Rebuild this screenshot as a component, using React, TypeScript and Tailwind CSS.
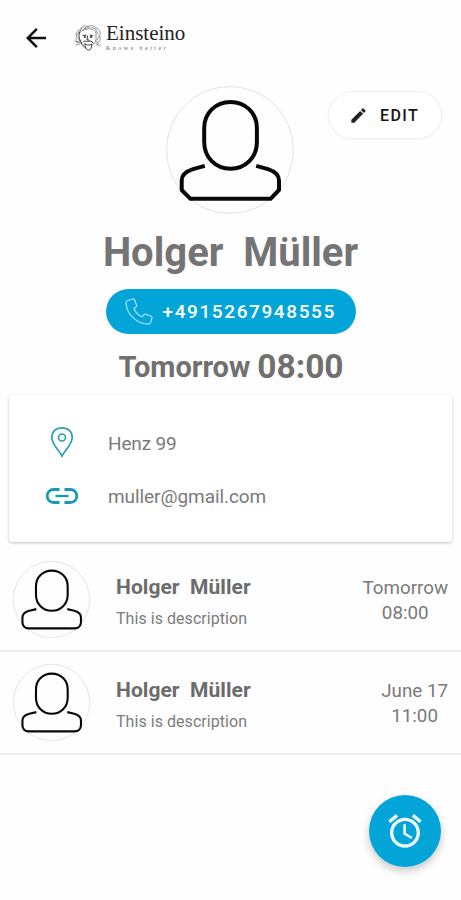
import clsx from 'clsx';

type Appointment = {
  id: number;
  name: string;
  description: string;
  day: string;
  time: string;
};

const APPOINTMENTS: Appointment[] = [
  { id: 1, name: 'Holger  Müller', description: 'This is description', day: 'Tomorrow', time: '08:00' },
  { id: 2, name: 'Holger  Müller', description: 'This is description', day: 'June 17', time: '11:00' },
];

function Avatar({ large = false }: { large?: boolean }) {
  return (
    <svg
      viewBox="0 0 128 128"
      fill="none"
      className={clsx('shrink-0', large ? 'size-[128px]' : 'size-[77px]')}
    >
      <circle cx="64" cy="64" r="63.4" stroke="#e2e2e2" strokeWidth={large ? 1 : 1.5} />
      <g stroke="#080808" strokeWidth={large ? 4 : 3.5} strokeLinejoin="round">
        <path d="M38.2 42C38.2 27 49.5 16 64.5 16S90.9 27 90.9 42V56C90.9 71.5 79.5 82.8 64.5 82.8S38.2 71.5 38.2 56Z" />
        {large ? (
          <path d="M38.8 79.8L27 83.2C20 85.5 15.7 88.500 15.7 94.5V104L24.5 112.8H104.5L113 104V94.5C113 88.5 108.7 85.5 102 83.2L90.2 79.8" />
        ) : (
          <path d="M38.8 80L27 82.7C20 84.5 15.7 88 15.7 94V102C15.7 108 20 112 26 112H102.5C108.5 112 113 108 113 102V94C113 88 108.7 84.5 102 82.7L90.2 80" />
        )}
      </g>
    </svg>
  );
}

function LogoMark() {
  return (
    <svg viewBox="0 0 28 28" fill="none" strokeLinecap="round" className="size-[28px] shrink-0">
      <g stroke="#777" strokeWidth="0.8">
        <path d="M7 19C2 18 1 15 3 13C1 10 3 6 6 6C7 3 11 1 14 2.5C17 0.5 21 2 22 4C26 5 27 9 25.5 12C27 15 26 18 23 19" />
        <path d="M5 8L3 11M4 14L6 17M8 4L5 9M12 3L8 7M22 6L24 10M25 12L23 16M3 19L7 16M25 20L22 17M1 17L4 18M2 21L6 20M26 22L22 20" />
        <path d="M8 7C11 5 13 6 15 4C18 6 20 5 22 9V16C21 19 19 21 17 22" />
        <path d="M17 4C19 3 21 4 22 6M10 5C12 4 13 4 15 3" />
      </g>
      <g stroke="#333" strokeWidth="1">
        <path d="M6 8C4 11 5 15 7 18C8 21 10 23 12 24" />
        <path d="M9 11.5L12 11M16 11L19 12M13.5 12L13 16H15" />
        <path d="M9 18C11 16 13 18 14 17.5C16 16.5 18 17 19 19" />
        <path d="M11 20C11 25 13 26 15 26S18 23 17.5 20C15 21.5 13 21.5 11 20Z" strokeWidth="0.9" />
      </g>
      <circle cx="10.8" cy="13" r="1" fill="#222" />
      <circle cx="17" cy="13" r="1" fill="#222" />
    </svg>
  );
}

function Header() {
  return (
    <header className="flex h-[76px] items-center pl-[21px]">
      <svg viewBox="0 0 24 24" fill="#111" className="size-[30px]">
        <path d="M20 11H7.83l5.59-5.59L12 4l-8 8 8 8 1.41-1.41L7.83 13H20v-2z" />
      </svg>
      <div className="ml-[23px] flex items-center gap-[4px]">
        <LogoMark />
        <div className="pb-[4px] font-['Liberation_Serif',serif] text-[#222]">
          <p className="text-[21px] leading-[24px]">Einsteino</p>
          <p className="text-[6px] leading-[7px] tracking-[2.5px] text-[#666]">Knows better</p>
        </div>
      </div>
    </header>
  );
}

function Profile() {
  return (
    <section className="flex flex-col items-center">
      <div className="mt-[10px] flex w-full pr-[1px]">
        <div className="flex-1" />
        <Avatar large />
        <div className="flex flex-1 justify-end">
          <button className="mt-[5px] mr-[18px] flex h-[48px] w-[114px] items-center rounded-full border border-[#f0f0f0] bg-white pl-[20px] text-[16px] font-medium tracking-[1.4px] text-[#161616] shadow-[0_1px_2px_rgba(0,0,0,0.04)]">
            <svg viewBox="0 0 24 24" fill="#222" className="mr-[12px] size-[19px]">
              <path d="M3 17.25V21h3.75L17.81 9.94l-3.75-3.75L3 17.25zM20.71 7.04c.39-.39.39-1.02 0-1.41l-2.34-2.34c-.39-.39-1.02-.39-1.41 0l-1.83 1.83 3.75 3.75 1.83-1.83z" />
            </svg>
            <span className="pt-[1px]">EDIT</span>
          </button>
        </div>
      </div>

      <h1 className="mt-[16px] text-[40px] leading-[46px] font-bold whitespace-pre text-[#747474]">
        {'Holger  Müller'}
      </h1>

      <button className="mt-[13px] flex h-[45px] w-[250px] items-center rounded-full bg-[#03a4d8] pl-[19px] text-[19px] font-medium tracking-[1.6px] text-white">
        <svg viewBox="0 0 28 28" fill="none" stroke="#a9e2f3" strokeWidth="1.2" strokeLinejoin="round" className="mr-[10px] size-[28px]">
          <path d="M2.5 2.8L7.5 1C8.5 .7 9.2 1 9.6 2L11.5 7C11.8 8 11.5 8.7 10.7 9.2L9 10.5C10.5 14.5 13.5 17.5 17.3 18.8L18.7 17C19.3 16.2 20 16 21 16.4L26 18.3C27 18.7 27.2 19.4 26.9 20.3L25.5 24.5C25.1 25.7 24.2 26.3 23 26.2C11 25.3 1.7 16 1 5C.9 4 1.5 3.2 2.5 2.8Z" />
        </svg>
        <span className="pt-[2px]">+4915267948555</span>
      </button>

      <p className="mt-[13px] flex items-center gap-[7px] pl-[1px] leading-[40px] font-bold text-[#707070]">
        <span className="text-[29px]">Tomorrow</span>
        <span className="text-[33.5px]">08:00</span>
      </p>
    </section>
  );
}

function ContactCard() {
  return (
    <section className="mx-[9px] mt-[8px] h-[147px] rounded-[3px] bg-white pt-[20px] pl-[26px] text-[19px] text-[#7a7a7a] shadow-[0_1px_3px_rgba(0,0,0,0.24)]">
      <div className="flex h-[54px] items-center">
        <div className="mr-[19px] flex w-[54px] justify-center">
          <svg viewBox="0 0 24 32" fill="none" stroke="#2a9fb9" strokeWidth="1.7" className="h-[32px] w-[24px]">
            <path d="M12 30C9 24 1.8 18.5 1.8 11.5C1.8 5.5 6 1.8 12 1.8S22.2 5.5 22.2 11.5C22.2 18.5 15 24 12 30Z" />
            <circle cx="12" cy="11.5" r="3.5" />
          </svg>
        </div>
        <p className="pt-[4px] tracking-[-0.15px]">Henz 99</p>
      </div>
      <div className="flex h-[54px] items-center">
        <div className="mr-[18px] flex w-[54px] justify-center pr-[1px]">
          <svg viewBox="0 0 34 18" fill="none" stroke="#1599b7" strokeWidth="2.8" className="h-[18px] w-[34px]">
            <path d="M14.5 2.5H9C4.5 2.5 2.2 5.5 2.2 9S4.5 15.5 9 15.5H14.5M19.5 2.5H25C29.5 2.5 31.8 5.5 31.8 9S29.5 15.5 25 15.5H19.5" />
            <path d="M10.5 9H23.5" strokeWidth="2.3" />
          </svg>
        </div>
        <p className="pt-[2px] pl-[1px] tracking-[-0.07px]">muller@gmail.com</p>
      </div>
    </section>
  );
}

function AppointmentRow({ appointment }: { appointment: Appointment }) {
  return (
    <li className="flex h-[103px] items-center border-b-2 border-[#eeeeee] pr-[13px] pl-[13px]">
      <Avatar />
      <div className="ml-[26px] flex-1 pt-[4px]">
        <p className="text-[21px] leading-[34px] font-bold tracking-[0.05px] whitespace-pre text-[#6c6c6c]">{appointment.name}</p>
        <p className="text-[16px] leading-[29px] tracking-[0.05px] text-[#7c7c7c]">{appointment.description}</p>
      </div>
      <div className="pt-[2px] text-center text-[18.8px] leading-[25px] text-[#7a7a7a]">
        <p>{appointment.day}</p>
        <p>{appointment.time}</p>
      </div>
    </li>
  );
}

export default function App() {
  return (
    <main className="relative h-[900px] w-full overflow-hidden bg-[#fefefe] font-[Roboto,sans-serif]">
      <Header />
      <Profile />
      <ContactCard />
      <ul className="mt-[7px]">
        {APPOINTMENTS.map((appointment) => (
          <AppointmentRow key={appointment.id} appointment={appointment} />
        ))}
      </ul>

      <button className="absolute right-[20px] bottom-[33px] flex size-[72px] items-center justify-center rounded-full bg-[#03a4d8] shadow-[0_4px_8px_rgba(0,0,0,0.22)]">
        <svg viewBox="0 0 24 24" fill="#f2fcff" className="size-[40px]">
          <path d="M22 5.72l-4.6-3.86-1.29 1.53 4.6 3.86L22 5.72zM7.88 3.39L6.6 1.86 2 5.71l1.29 1.53 4.59-3.85zM12.5 8H11v6l4.75 2.85.75-1.23-4-2.37V8zM12 4c-4.97 0-9 4.03-9 9s4.02 9 9 9c4.97 0 9-4.03 9-9s-4.03-9-9-9zm0 16c-3.87 0-7-3.13-7-7s3.13-7 7-7 7 3.13 7 7-3.13 7-7 7z" />
        </svg>
      </button>
    </main>
  );
}
